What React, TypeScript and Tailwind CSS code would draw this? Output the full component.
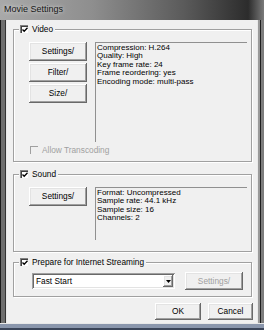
import React from "react";

const FONT = { fontFamily: '"Liberation Sans", Arial, sans-serif' };

function Check({ disabled }: { disabled?: boolean }) {
  if (disabled) {
    return (
      <span className="relative inline-block w-[8px] h-[8px] shrink-0 bg-[#f0f0f0] border-l border-t border-[#a0a0a0] border-r-white border-b-white" />
    );
  }
  return (
    <span className="relative inline-flex items-center justify-center w-[8px] h-[8px] shrink-0 bg-white border-l border-t border-[#808080] border-r-white border-b-white shadow-[inset_1px_1px_0_#404040]">
      <svg width="6" height="6" viewBox="0 0 6 6" className="ml-[1px] mt-[1px]">
        <path d="M0.5 2.5 L2.2 4.3 L5.5 0.8" fill="none" stroke="#000" strokeWidth="1.3" />
      </svg>
    </span>
  );
}

const raised =
  "shadow-[inset_-1px_-1px_0_#696969,inset_1px_1px_0_#ffffff,inset_-2px_-2px_0_#a0a0a0,inset_2px_2px_0_#e3e3e3]";

function Btn({ label, w, h, disabled }: { label: string; w: string; h: string; disabled?: boolean }) {
  return (
    <div
      className={`${w} ${h} flex items-center justify-center bg-[#f0f0f0] text-[8.3px] ${raised} ${
        disabled ? "text-[#a0a0a0]" : "text-black"
      }`}
    >
      {label}
    </div>
  );
}

function GroupHeader({ label }: { label: string }) {
  return (
    <div className="-mt-[6px] ml-[5px] w-fit h-[10px] flex items-center gap-[4px] bg-[#f0f0f0] pl-[1px] pr-[2px]">
      <Check />
      <span className="text-[8.3px] leading-[10px]">{label}</span>
    </div>
  );
}

const groupCls = "border border-[#a0a0a0] shadow-[inset_1px_1px_0_#ffffff,1px_1px_0_#ffffff]";
const infoCls =
  "bg-[#f0f0f0] border-l border-t border-[#909090] border-r-white border-b-white pl-[1px] pt-[1px] text-[8px] leading-[8.4px] whitespace-nowrap";

export default function App() {
  return (
    <div className="w-[264px] h-[330px] flex flex-col overflow-hidden text-black" style={FONT}>
      {/* Title bar */}
      <div className="h-[20px] shrink-0 flex items-center pl-[4px] bg-[linear-gradient(to_right,#a9a9a9,#8e8e8e_35%,#5a5a5a_70%,#2c2c2c_94%,#7a7a7a)]">
        <span className="text-[9px] text-[#161616] [text-shadow:0_0_4px_rgba(255,255,255,0.8)]">Movie Settings</span>
      </div>
      <div className="flex flex-1 min-h-0">
        <div className="w-[7px] shrink-0 bg-[linear-gradient(to_right,#1a1a1a_0,#1a1a1a_1px,#6e6e6e_1px,#6e6e6e_5px,#333333_5px,#333333_6px,#e8e8e8_6px)]" />
        <div className="flex-1 min-w-0 bg-[#f0f0f0] flex flex-col pt-[9px] pl-[6px] pr-[5px]">
          {/* Video */}
          <div className={groupCls}>
            <GroupHeader label="Video" />
            <div className="flex mt-[8px] ml-[15px]">
              <div className="flex flex-col gap-[2px]">
                <Btn label="Settings/" w="w-[58px]" h="h-[19px]" />
                <Btn label="Filter/" w="w-[58px]" h="h-[19px]" />
                <Btn label="Size/" w="w-[58px]" h="h-[19px]" />
              </div>
              <div className={`ml-[8px] w-[152px] h-[100px] ${infoCls}`}>
                <div>Compression: H.264</div>
                <div>Quality: High</div>
                <div>Key frame rate: 24</div>
                <div>Frame reordering: yes</div>
                <div>Encoding mode: multi-pass</div>
              </div>
            </div>
            <div className="mt-[3px] ml-[16px] h-[10px] flex items-center gap-[4px] mb-[6px]">
              <Check disabled />
              <span className="text-[8.3px] text-[#a0a0a0]">Allow Transcoding</span>
            </div>
          </div>

          {/* Sound */}
          <div className={`mt-[12px] pb-[11px] ${groupCls}`}>
            <GroupHeader label="Sound" />
            <div className="flex mt-[8px] ml-[15px]">
              <Btn label="Settings/" w="w-[58px]" h="h-[19px]" />
              <div className={`ml-[8px] w-[152px] h-[53px] ${infoCls}`}>
                <div>Format: Uncompressed</div>
                <div>Sample rate: 44.1 kHz</div>
                <div>Sample size: 16</div>
                <div>Channels: 2</div>
              </div>
            </div>
          </div>

          {/* Streaming */}
          <div className={`mt-[10px] pb-[6px] ${groupCls}`}>
            <GroupHeader label="Prepare for Internet Streaming" />
            <div className="flex items-center mt-[5px] ml-[18px] h-[18px]">
              <div className="w-[143px] h-[16px] bg-white flex items-center shadow-[inset_1px_1px_0_#a0a0a0,inset_-1px_-1px_0_#ffffff,inset_2px_2px_0_#696969,inset_-2px_-2px_0_#e3e3e3] pl-[4px] pr-[2px]">
                <span className="flex-1 text-[8.3px]">Fast Start</span>
                <div className={`w-[10px] h-[12px] flex items-center justify-center bg-[#f0f0f0] ${raised}`}>
                  <svg width="5" height="3" viewBox="0 0 5 3">
                    <path d="M0 0 H5 L2.5 3 Z" fill="#000" />
                  </svg>
                </div>
              </div>
              <div className="ml-[10px]">
                <Btn label="Settings/" w="w-[58px]" h="h-[18px]" disabled />
              </div>
            </div>
          </div>

          {/* OK / Cancel */}
          <div className="flex justify-end gap-[7px] mt-[6px] -mr-[1px]">
            <Btn label="OK" w="w-[46px]" h="h-[17px]" />
            <Btn label="Cancel" w="w-[45px]" h="h-[17px]" />
          </div>
        </div>
        <div className="w-[7px] shrink-0 bg-[linear-gradient(to_right,#e8e8e8_0,#e8e8e8_1px,#9a9a9a_1px,#9a9a9a_3px,#1e1e1e_3px,#1e1e1e_4px,#7d7d7d_4px)]" />
      </div>
      <div className="h-[7px] shrink-0 bg-[linear-gradient(to_bottom,#e8e8e8_0,#e8e8e8_1px,#8a96ac_1px,#8a96ac_5px,#3a4458_5px)]" />
    </div>
  );
}
